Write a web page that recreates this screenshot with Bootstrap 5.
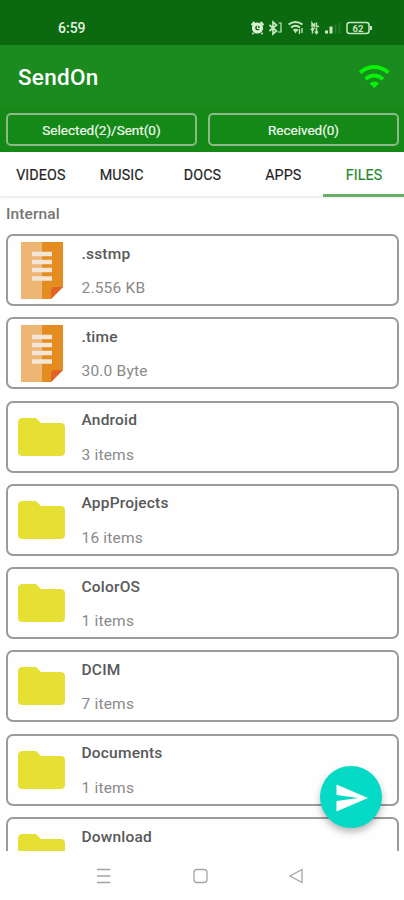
<!DOCTYPE html>
<html lang="en">
<head>
<meta charset="utf-8">
<meta name="viewport" content="width=device-width, initial-scale=1">
<title>SendOn</title>
<link href="https://cdn.jsdelivr.net/npm/bootstrap@5.3.0/dist/css/bootstrap.min.css" rel="stylesheet">
<style>
body{font-family:Roboto,"Liberation Sans",sans-serif;background:#fefefe}
svg{display:block;flex:none}
.screen{height:900px}
.status{height:44.5px;background:#0b6a10;color:#e4f2e0;padding:11px 31px 0 58px}
.clock{font-size:14px;font-weight:500;line-height:18px}
.appbar{height:63.5px;background:#1b8b20;padding:0 14px 0 18px}
.title{font-size:22.5px;font-weight:500;letter-spacing:.25px;line-height:30px;padding-top:2px}
.counters{height:44px;background:#148918;padding:5px 5px 0 6px;gap:11px}
.counter{height:33px;border:2px solid #8fb98b;border-radius:5px;color:#f0faee;font-size:13.500px;line-height:16px;font-weight:400;flex:1 1 0;padding:1px 0 0;-webkit-text-stroke:.2px}
.tabs{height:44px;box-shadow:0 2px 2px #ececec}
.tabs .nav-link{width:20%;height:45px;padding:0 0 0 1px;font-size:14.300px;letter-spacing:.1px;line-height:46px;color:#222;border-radius:0;text-align:center;-webkit-text-stroke:.15px}
.tabs .nav-link.active{color:#1d8a26;border-bottom:3px solid #67ae69}
.files{padding:0 5px 0 6px}
.place{height:38px;padding-top:9px;font-size:15.500px;line-height:18px;font-weight:500;color:#757575;letter-spacing:.1px}
.entry{height:72px;margin-bottom:11.3px;border:2px solid #9b9b9b;border-radius:7px;flex:none}
.thumb{width:68px;padding-right:1px}
.names{padding:8.500px 0 0 5.5px}
.fname{font-size:15.500px;line-height:18px;font-weight:500;color:#595959;letter-spacing:.2px}
.fmeta{font-size:15.500px;line-height:18px;color:#8a8a8a;letter-spacing:.2px;margin-top:16.5px}
.send{left:320px;top:766px;width:62px;height:62px;background:#04dac6;box-shadow:0 4px 7px rgba(0,0,0,.28)}
.sysnav{height:49px}
</style>
<script src="https://cdn.jsdelivr.net/npm/bootstrap@5.3.0/dist/js/bootstrap.bundle.min.js"></script>
</head>
<body>
<svg width="0" height="0" class="position-absolute">
<symbol id="doc" viewBox="0 0 42 57"><path fill="#edb673" d="M0 0h21v57H0z"/><path fill="#e58c20" d="M21 0h21v45L30 57h-9z"/><path fill="#e2622a" d="M42 45H34q-3.500 0-4 3.500V57z"/><path d="M11 12h20M11 20h20M11 28h20M11 36.500h20" stroke="#f3e6d6" stroke-width="4.500"/></symbol>
<symbol id="folder" viewBox="0 0 47 38"><path fill="#e6df34" d="M4.500 0H18l5 5h19.500Q47 5 47 9.500v24Q47 38 42.500 38h-38Q0 38 0 33.500v-29Q0 0 4.500 0z"/></symbol>
</svg>
<div class="screen d-flex flex-column position-relative overflow-hidden">
<header>
<div class="status d-flex justify-content-between align-items-start">
<span class="clock mt-2">6:59</span>
<svg width="124" height="18" viewBox="248 19 124 18" class="mt-2" fill="none" stroke="#c9e8c0">
<g stroke="#dff2d8"><circle cx="256.500" cy="28" r="4" stroke-width="3.200"/><path d="M250.500 25l3-3M262.500 25l-3-3M252.500 33l-1 1M260.500 33l1 1" stroke-width="1.800"/><path d="M256.500 25.500V28.500h2.500" stroke-width="1.200"/></g>
<path d="M268.500 25l7 6-3.500 3V22l3.500 3-7 6" stroke-width="1.700"/><path d="M277.500 23h2.500v9h-3" stroke-width="1.200"/>
<path d="M287.500 24.500q7-5 14 0M290 27.500q4.500-3.500 9 0M292.500 30.500q2-1.600 4.500 0" stroke-width="2"/><path d="M293 31h3l-1.500 2.500z" fill="#c9e8c0" stroke="none"/><path d="M298.500 29v5M301 28v5" stroke-width="1.300"/>
<path d="M311 27v-4l2.500 4v-4M315.500 22.500v4h2.500M311.500 33.500v-5M310 30l1.500-2 1.500 2M315.500 28v5.500M314 31.500l1.500 2 1.500-2" stroke-width="1.400"/>
<path d="M324 33.500h3v-3h-3zM328.500 33.500h3v-7h-3z" fill="#c9e8c0" stroke="none"/><path d="M334.500 24.500v9M338.500 22v11.500" stroke="#2a7c2b" stroke-width="1.800"/>
<rect x="346" y="22.500" width="22" height="11" rx="2.500" stroke-width="1.500"/><path d="M370 26v4" stroke-width="2"/>
<text x="357" y="31.500" text-anchor="middle" font-size="9.500" font-weight="700" fill="#c9e8c0" stroke="none">62</text>
</svg>
</div>
<div class="appbar d-flex align-items-center justify-content-between">
<span class="title text-white">SendOn</span>
<svg width="32" height="24" viewBox="358 64 32 24" fill="none" stroke="#07f207" stroke-width="3.800"><path d="M360 72.500q14-11 28.500 0M365.500 79q8.500-7 17.500 0"/><path d="M369.500 83.500q5-4 9.500 0l-4.700 4.500z" fill="#07f207" stroke="none"/></svg>
</div>
<div class="counters d-flex">
<button class="counter btn">Selected(2)/Sent(0)</button>
<button class="counter btn">Received(0)</button>
</div>
</header>
<nav class="tabs nav nav-fill flex-nowrap flex-shrink-0">
<a class="nav-link" href="#">VIDEOS</a><a class="nav-link" href="#">MUSIC</a><a class="nav-link" href="#">DOCS</a><a class="nav-link" href="#">APPS</a><a class="nav-link active" href="#">FILES</a>
</nav>
<main class="files flex-grow-1 overflow-hidden d-flex flex-column">
<div class="place flex-shrink-0">Internal</div>
<div class="entry d-flex"><div class="thumb d-flex align-items-center justify-content-center"><svg width="42" height="57"><use href="#doc"/></svg></div><div class="names"><div class="fname">.sstmp</div><div class="fmeta">2.556 KB</div></div></div>
<div class="entry d-flex"><div class="thumb d-flex align-items-center justify-content-center"><svg width="42" height="57"><use href="#doc"/></svg></div><div class="names"><div class="fname">.time</div><div class="fmeta">30.0 Byte</div></div></div>
<div class="entry d-flex"><div class="thumb d-flex align-items-center justify-content-center"><svg width="47" height="38"><use href="#folder"/></svg></div><div class="names"><div class="fname">Android</div><div class="fmeta">3 items</div></div></div>
<div class="entry d-flex"><div class="thumb d-flex align-items-center justify-content-center"><svg width="47" height="38"><use href="#folder"/></svg></div><div class="names"><div class="fname">AppProjects</div><div class="fmeta">16 items</div></div></div>
<div class="entry d-flex"><div class="thumb d-flex align-items-center justify-content-center"><svg width="47" height="38"><use href="#folder"/></svg></div><div class="names"><div class="fname">ColorOS</div><div class="fmeta">1 items</div></div></div>
<div class="entry d-flex"><div class="thumb d-flex align-items-center justify-content-center"><svg width="47" height="38"><use href="#folder"/></svg></div><div class="names"><div class="fname">DCIM</div><div class="fmeta">7 items</div></div></div>
<div class="entry d-flex"><div class="thumb d-flex align-items-center justify-content-center"><svg width="47" height="38"><use href="#folder"/></svg></div><div class="names"><div class="fname">Documents</div><div class="fmeta">1 items</div></div></div>
<div class="entry d-flex"><div class="thumb d-flex align-items-center justify-content-center"><svg width="47" height="38"><use href="#folder"/></svg></div><div class="names"><div class="fname">Download</div></div></div>
</main>
<button class="send btn rounded-circle position-absolute p-0 border-0" aria-label="Send"><svg width="62" height="62" viewBox="320 766 62 62"><path fill="#fff" d="M336.500 784.500L368 798l-31.500 13.500v-10.500l22-3-22-3z"/></svg></button>
<footer class="sysnav flex-shrink-0">
<svg width="404" height="49" viewBox="0 851 404 49" fill="none" stroke="#a5a5a5" stroke-width="1.300"><path d="M97 869.500h13.500M97 876h13.500M97 882.500h13.500"/><rect x="194" y="869.500" width="13" height="13" rx="3"/><path d="M302 869.500v13l-12-6.500z"/></svg>
</footer>
</div>
</body>
</html>
